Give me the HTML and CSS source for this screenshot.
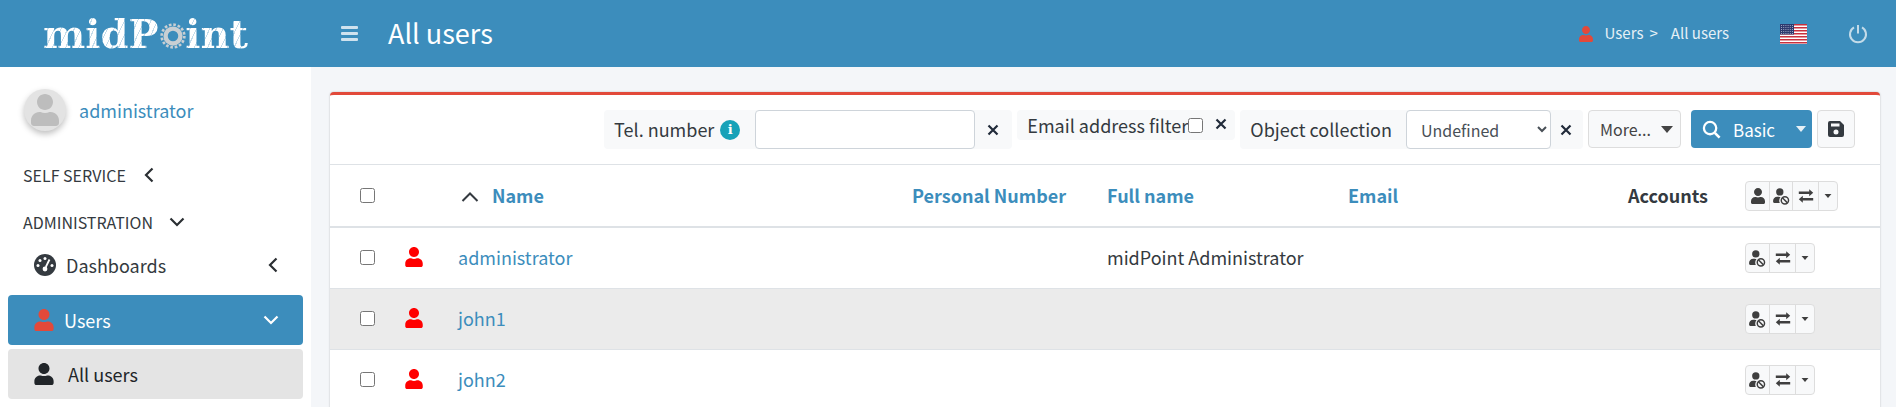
FILE: index.html
```html
<!DOCTYPE html>
<html lang="en">
<head>
<meta charset="utf-8">
<title>All users</title>
<link rel="stylesheet" href="styles.css">
</head>
<body>
<svg class="defs" width="0" height="0" aria-hidden="true">
  <defs>
    <symbol id="i-user" viewBox="0 0 448 512"><path d="M224 256c70.7 0 128-57.3 128-128S294.7 0 224 0 96 57.3 96 128s57.3 128 128 128zm89.6 32h-16.7c-22.2 10.2-46.9 16-72.9 16s-50.6-5.8-72.9-16h-16.7C60.2 288 0 348.2 0 422.4V464c0 26.5 21.5 48 48 48h352c26.5 0 48-21.5 48-48v-41.6c0-74.2-60.2-134.4-134.4-134.4z"/></symbol>
    <symbol id="i-ban" viewBox="0 0 20 20">
      <circle cx="8" cy="4.6" r="4.3" fill="currentColor"/>
      <path d="M1.5 17.5c-.8 0-1.4-.6-1.4-1.4v-1c0-2.700 2.100-4.800 4.800-4.800h1.800c.7.300 1.400.4 2.100.4-.9 1.200-1.500 2.600-1.500 4.100 0 1 .2 1.900.7 2.700z" fill="currentColor"/>
      <circle cx="14" cy="14.500" r="4.300" fill="none" stroke="currentColor" stroke-width="1.700"/>
      <path d="M11 11.500l6 6" stroke="currentColor" stroke-width="1.700"/>
    </symbol>
    <symbol id="i-exchange" viewBox="0 0 20 20"><path d="M2 6h12M2 14h16" stroke="none"/><path d="M1 4.500h13V1.700L19 6l-5 4.300V7.500H1zM19 12.500H6V9.700L1 14l5 4.300v-2.800h13z" fill="currentColor"/></symbol>
    <symbol id="i-x" viewBox="0 0 12 12"><path d="M1.500 1.500l9 9M10.500 1.500l-9 9" fill="none" stroke="currentColor" stroke-width="2.200"/></symbol>
    <symbol id="i-left" viewBox="0 0 10 16"><path d="M8.500 1.500L2 8l6.500 6.500" fill="none" stroke="currentColor" stroke-width="2.200"/></symbol>
    <symbol id="i-down" viewBox="0 0 16 10"><path d="M1.500 1.500L8 8l6.500-6.500" fill="none" stroke="currentColor" stroke-width="2.200"/></symbol>
    <symbol id="i-up" viewBox="0 0 18 10"><path d="M1.500 9L9 1.500 16.500 9" fill="none" stroke="currentColor" stroke-width="2"/></symbol>
    <symbol id="i-caret" viewBox="0 0 12 7"><path d="M0 0h12L6 7z" fill="currentColor"/></symbol>
  </defs>
</svg>

<header class="topbar">
  <div class="brand">
    <span class="logo"><span class="logo-part">midP</span><span class="logo-o">o<svg class="gear" viewBox="0 0 32 32" aria-hidden="true"><circle cx="16" cy="16" r="8.500" fill="none" stroke="#c9cfd3" stroke-width="5"/><circle cx="16" cy="16" r="13" fill="none" stroke="#c9cfd3" stroke-width="3" stroke-dasharray="3 2.100"/></svg></span><span class="logo-part">int</span></span>
  </div>
  <button class="hamburger" aria-label="Menu"><span></span><span></span><span></span></button>
  <h1 class="page-title">All users</h1>
  <nav class="crumbs">
    <svg class="crumb-icon"><use href="#i-user"/></svg>
    <span class="crumb">Users</span><span class="crumb-sep">&gt;</span>
    <span class="crumb">All users</span>
  </nav>
  <svg class="flag" viewBox="0 0 27 20" aria-hidden="true">
    <rect width="27" height="20" fill="#fff"/>
    <path d="M0 0h27v1.500H0zM0 3h27v1.500H0zM0 6h27v1.500H0zM0 9h27v1.500H0zM0 12h27v1.500H0zM0 15h27v1.500H0zM0 18h27v1.500H0z" fill="#c8313e"/>
    <rect width="14" height="10.500" fill="#2d3a6e"/>
    <path d="M1 1.500h12M1 3.500h12M1 5.500h12M1 7.500h12M1 9.500h12" stroke="#b9bfd6" stroke-width=".8" stroke-dasharray="1 1.200"/>
  </svg>
  <svg class="power" viewBox="0 0 20 20" aria-hidden="true"><path d="M6 3.400a8 8 0 1 0 8 0" fill="none" stroke="currentColor" stroke-width="2"/><path d="M10 1v8.500" stroke="currentColor" stroke-width="2" fill="none"/></svg>
</header>

<div class="layout">
  <aside class="sidebar">
    <div class="profile">
      <div class="avatar"><svg class="avatar-icon"><use href="#i-user"/></svg></div>
      <a class="profile-name">administrator</a>
    </div>
    <div class="section section-self"><span>SELF SERVICE</span><svg class="sec-left"><use href="#i-left"/></svg></div>
    <div class="section section-admin"><span>ADMINISTRATION</span><svg class="sec-down"><use href="#i-down"/></svg></div>
    <div class="menu-item">
      <svg class="gauge" viewBox="0 0 22 22" aria-hidden="true">
        <circle cx="11" cy="11" r="11" fill="#343a40"/>
        <g fill="#fff"><circle cx="11" cy="4.500" r="1.500"/><circle cx="6" cy="6.500" r="1.500"/><circle cx="4" cy="11.500" r="1.500"/><circle cx="18" cy="11.500" r="1.500"/></g>
        <path d="M15.500 5.500L11.800 13" stroke="#fff" stroke-width="1.800"/><circle cx="11" cy="15" r="2.400" fill="#fff"/>
      </svg>
      <span class="menu-label">Dashboards</span>
      <svg class="menu-left"><use href="#i-left"/></svg>
    </div>
    <div class="menu-item menu-active">
      <svg class="menu-user"><use href="#i-user"/></svg>
      <span class="menu-label">Users</span>
      <svg class="menu-down"><use href="#i-down"/></svg>
    </div>
    <div class="menu-item menu-sub">
      <svg class="menu-user"><use href="#i-user"/></svg>
      <span class="menu-label">All users</span>
    </div>
  </aside>

  <main class="content">
    <section class="box">
      <div class="toolbar">
        <div class="filter filter-tel">
          <span class="filter-label">Tel. number</span>
          <span class="info">i</span>
          <input class="text-input" type="text">
          <svg class="clear"><use href="#i-x"/></svg>
        </div>
        <div class="filter filter-email">
          <span class="filter-label">Email address filter</span>
          <input class="check email-check" type="checkbox">
          <svg class="clear"><use href="#i-x"/></svg>
        </div>
        <div class="filter filter-coll">
          <span class="filter-label">Object collection</span>
          <select class="select"><option>Undefined</option></select>
          <svg class="clear"><use href="#i-x"/></svg>
        </div>
        <button class="btn-more">More...<svg class="caret-more"><use href="#i-caret"/></svg></button>
        <button class="btn-basic">
          <svg class="search" viewBox="0 0 20 20" aria-hidden="true"><circle cx="8.500" cy="8.500" r="6.500" fill="none" stroke="currentColor" stroke-width="2.400"/><path d="M13.500 13.500l5 5" stroke="currentColor" stroke-width="2.800"/></svg>
          <span class="basic-label">Basic</span>
          <svg class="caret-basic"><use href="#i-caret"/></svg>
        </button>
        <button class="btn-save" aria-label="Save">
          <svg class="save" viewBox="0 0 16 16" aria-hidden="true"><path d="M2 0h10l4 4v10a2 2 0 0 1-2 2H2a2 2 0 0 1-2-2V2a2 2 0 0 1 2-2zm1 2.500v3h8.500v-3zM8 8.500a2.500 2.500 0 1 0 0 5 2.500 2.500 0 0 0 0-5z" fill="#343a40" fill-rule="evenodd"/></svg>
        </button>
      </div>

      <table class="grid">
        <colgroup>
          <col class="c-check"><col class="c-icon"><col class="c-name"><col class="c-num"><col class="c-full"><col class="c-mail"><col class="c-acc"><col class="c-act">
        </colgroup>
        <thead>
          <tr>
            <th class="cell-check"><input class="check" type="checkbox"></th>
            <th></th>
            <th class="th-name"><svg class="sort"><use href="#i-up"/></svg><a>Name</a></th>
            <th><a>Personal Number</a></th>
            <th><a>Full name</a></th>
            <th><a>Email</a></th>
            <th class="th-acc">Accounts</th>
            <th class="cell-act">
              <div class="btn-group">
                <span class="seg seg-user"><svg class="ic-user"><use href="#i-user"/></svg></span>
                <span class="seg seg-ban"><svg class="ic-ban"><use href="#i-ban"/></svg></span>
                <span class="seg seg-ex"><svg class="ic-ex"><use href="#i-exchange"/></svg></span>
                <span class="seg seg-car"><svg class="ic-car"><use href="#i-caret"/></svg></span>
              </div>
            </th>
          </tr>
        </thead>
        <tbody>
          <tr>
            <td class="cell-check"><input class="check" type="checkbox"></td>
            <td><svg class="row-user"><use href="#i-user"/></svg></td>
            <td><a>administrator</a></td><td></td><td>midPoint Administrator</td><td></td><td></td>
            <td class="cell-act"><div class="btn-group"><span class="seg seg-ban"><svg class="ic-ban"><use href="#i-ban"/></svg></span><span class="seg seg-ex"><svg class="ic-ex"><use href="#i-exchange"/></svg></span><span class="seg seg-car"><svg class="ic-car"><use href="#i-caret"/></svg></span></div></td>
          </tr>
          <tr class="row-alt">
            <td class="cell-check"><input class="check" type="checkbox"></td>
            <td><svg class="row-user"><use href="#i-user"/></svg></td>
            <td><a>john1</a></td><td></td><td></td><td></td><td></td>
            <td class="cell-act"><div class="btn-group"><span class="seg seg-ban"><svg class="ic-ban"><use href="#i-ban"/></svg></span><span class="seg seg-ex"><svg class="ic-ex"><use href="#i-exchange"/></svg></span><span class="seg seg-car"><svg class="ic-car"><use href="#i-caret"/></svg></span></div></td>
          </tr>
          <tr>
            <td class="cell-check"><input class="check" type="checkbox"></td>
            <td><svg class="row-user"><use href="#i-user"/></svg></td>
            <td><a>john2</a></td><td></td><td></td><td></td><td></td>
            <td class="cell-act"><div class="btn-group"><span class="seg seg-ban"><svg class="ic-ban"><use href="#i-ban"/></svg></span><span class="seg seg-ex"><svg class="ic-ex"><use href="#i-exchange"/></svg></span><span class="seg seg-car"><svg class="ic-car"><use href="#i-caret"/></svg></span></div></td>
          </tr>
        </tbody>
      </table>
    </section>
  </main>
</div>
</body>
</html>
```
FILE: styles.css
```css
* { box-sizing: border-box; }
html, body { height: 100%; }
body {
  margin: 0;
  height: 407px;
  overflow: hidden;
  font-family: "Noto Sans CJK SC", "Noto Sans CJK JP", Lato, sans-serif;
  font-size: 18px;
  line-height: 1.5;
  color: #343a40;
  background: #f4f6f9;
}
svg { display: block; fill: currentColor; flex: none; }
.defs { position: absolute; }
a { color: #3c8dbc; text-decoration: none; }

.topbar {
  height: 67px;
  background: #3c8dbc;
  color: #fff;
  display: flex;
  align-items: center;
}
.brand { width: 341px; flex: none; padding-left: 43px; }
.logo {
  display: flex;
  font-family: "DejaVu Serif", serif;
  font-weight: 700;
  font-size: 40px;
  line-height: 44px;
  letter-spacing: 0;
}
.logo-part {
  color: transparent;
  background: repeating-linear-gradient(115deg, #fff 0 5px, #c5dcea 5px 6px);
  -webkit-background-clip: text;
  background-clip: text;
}
.logo-o { position: relative; color: transparent; }
.gear { position: absolute; left: 0; top: 10px; width: 28px; height: 28px; }
.hamburger {
  width: 17px;
  height: 15px;
  padding: 0;
  border: 0;
  background: none;
  display: flex;
  flex-direction: column;
  justify-content: space-between;
  flex: none;
}
.hamburger span { display: block; height: 3px; border-radius: 1px; background: #cfe2ee; }
.page-title {
  margin: 0 0 0 30px;
  font-size: 27px;
  font-weight: 400;
  line-height: 1.2;
}
.crumbs {
  margin-left: auto;
  display: flex;
  align-items: center;
  font-size: 15px;
  color: #e6f0f6;
}
.crumb-icon { width: 14px; height: 16px; color: #e2493a; margin-right: 12px; }
.crumb-sep { margin: 0 13px 0 6px; }
.flag { width: 27px; height: 20px; margin-left: 51px; }
.power { width: 20px; height: 20px; margin: 0 28px 0 41px; color: #c3dbe9; }

.layout { display: flex; height: 340px; }
.sidebar {
  width: 311px;
  flex: none;
  background: #fff;
  padding: 21px 8px 0;
  overflow: hidden;
}
.profile { display: flex; align-items: center; padding-left: 16px; height: 44px; }
.avatar {
  width: 42px;
  height: 42px;
  border-radius: 50%;
  background: #e3e3e3;
  box-shadow: 0 3px 6px rgba(0,0,0,.25);
  display: flex;
  align-items: center;
  justify-content: center;
}
.avatar-icon { width: 30px; height: 32px; color: #bdbdbd; }
.profile-name { margin-left: 13px; }
.section {
  display: flex;
  align-items: center;
  padding-left: 15px;
  font-size: 16px;
  color: #343a40;
  height: 24px;
}
.section-self { margin-top: 31px; }
.section-admin { margin-top: 23px; }
.sec-left { width: 10px; height: 16px; margin-left: 18px; color: #2b2f33; }
.sec-down { width: 16px; height: 10px; margin-left: 16px; color: #2b2f33; }
.menu-item {
  display: flex;
  align-items: center;
  height: 50px;
  margin-top: 4px;
  padding-left: 26px;
  border-radius: 4px;
}
.section-admin + .menu-item { margin-top: 12px; height: 38px; margin-bottom: 11px; }
.gauge { width: 22px; height: 22px; }
.menu-label { margin-left: 10px; }
.menu-left { width: 10px; height: 16px; margin-left: auto; margin-right: 25px; color: #2b2f33; }
.menu-active { background: #3c8dbc; color: #fff; margin-top: 0; }
.menu-user { width: 20px; height: 22px; }
.menu-active .menu-user { color: #e2493a; }
.menu-down { width: 16px; height: 10px; margin-left: auto; margin-right: 24px; }
.menu-sub { background: #e4e4e4; color: #212529; }
.menu-sub .menu-label { margin-left: 14px; }

.content { flex: 1; padding: 25px 16px 0 19px; min-width: 0; }
.box {
  background: #fff;
  border-top: 3px solid #e2493a;
  border-radius: 4px 4px 0 0;
  box-shadow: 0 0 2px rgba(0,0,0,.25);
  height: 400px;
}
.toolbar {
  height: 70px;
  padding: 15px 25px 0 0;
  display: flex;
  justify-content: flex-end;
  align-items: flex-start;
  gap: 5px;
  border-bottom: 1px solid #dee2e6;
}
.filter {
  display: flex;
  align-items: center;
  background: #f8f9fa;
  border-radius: 4px;
  height: 39px;
  padding-left: 10px;
}
.filter-label { white-space: nowrap; }
.info {
  width: 20px;
  height: 20px;
  margin-left: 6px;
  border-radius: 50%;
  background: #17a2b8;
  color: #fff;
  font: 700 13px/20px "DejaVu Serif", serif;
  text-align: center;
}
.text-input {
  width: 220px;
  height: 39px;
  margin-left: 15px;
  border: 1px solid #ced4da;
  border-radius: 4px;
  background: #fff;
}
.clear { width: 12px; height: 12px; color: #212b3a; }
.filter-tel .clear { margin: 0 13px 0 12px; }
.filter-email { height: 30px; }
.email-check { margin: 0 0 3px 14px; }
.filter-email .clear { margin: 0 8px 3px 12px; }
.filter-coll .clear { margin: 0 11px 0 9px; }
.select {
  width: 145px;
  height: 39px;
  margin-left: 14px;
  padding: 0 10px;
  border: 1px solid #ced4da;
  border-radius: 4px;
  background: #fff;
  color: #495057;
  font: 16px "Noto Sans CJK SC", "Noto Sans CJK JP", Lato, sans-serif;
}
.check { width: 15px; height: 15px; margin: 0; display: block; }
.btn-more, .btn-basic, .btn-save {
  display: flex;
  align-items: center;
  height: 38px;
  padding: 0;
  border-radius: 4px;
  font: 16px "Noto Sans CJK SC", "Noto Sans CJK JP", Lato, sans-serif;
}
.btn-more {
  width: 93px;
  padding-left: 11px;
  background: #f8f9fa;
  border: 1px solid #ddd;
  color: #444;
}
.caret-more { width: 12px; height: 7px; margin-left: 10px; }
.btn-basic {
  width: 121px;
  margin-left: 5px;
  padding-left: 11px;
  background: #3c8dbc;
  border: 0;
  color: #fff;
  font-size: 17px;
}
.search { width: 19px; height: 19px; }
.basic-label { margin-left: 12px; }
.caret-basic { width: 10px; height: 6px; margin-left: 21px; color: #e6f0f6; }
.btn-save {
  width: 38px;
  justify-content: center;
  background: #f8f9fa;
  border: 1px solid #ddd;
}
.save { width: 16px; height: 16px; }

.grid { width: 100%; table-layout: fixed; border-collapse: collapse; }
.c-check { width: 64px; }
.c-icon { width: 52px; }
.c-name { width: 454px; }
.c-num { width: 195px; }
.c-full { width: 241px; }
.c-mail { width: 280px; }
.c-acc { width: 117px; }
.grid th, .grid td {
  padding: 0 0 0 12px;
  text-align: left;
  vertical-align: middle;
}
.grid thead tr { height: 62px; border-bottom: 2px solid #dee2e6; }
.grid tbody tr { height: 61px; border-bottom: 1px solid #dee2e6; }
.grid th { font-weight: 700; white-space: nowrap; }
.grid .cell-check { padding-left: 30px; }
.grid .cell-act { padding-left: 12px; }
.th-name a { margin-left: 13px; }
.th-name .sort { display: inline-block; vertical-align: 1px; }
.sort { width: 18px; height: 10px; color: #343a40; margin-left: 3px; }
.row-alt { background: #ebebeb; }
.row-user { width: 18px; height: 20px; color: #f00; margin: -2px 0 0 -1px; }

.btn-group {
  display: inline-flex;
  height: 30px;
  background: #f8f9fa;
  border: 1px solid #ddd;
  border-radius: 4px;
  vertical-align: middle;
}
.seg {
  display: flex;
  align-items: center;
  justify-content: center;
  border-left: 1px solid #ddd;
  color: #3f3f3f;
}
.seg:first-child { border-left: 0; }
.seg-user, .seg-ban { width: 23px; }
.seg-ex { width: 26px; }
.seg-car { width: 19px; }
.ic-user { width: 14px; height: 16px; }
.ic-ban { width: 17px; height: 17px; }
.ic-ex { width: 16px; height: 16px; }
.ic-car { width: 8px; height: 4px; }
```
